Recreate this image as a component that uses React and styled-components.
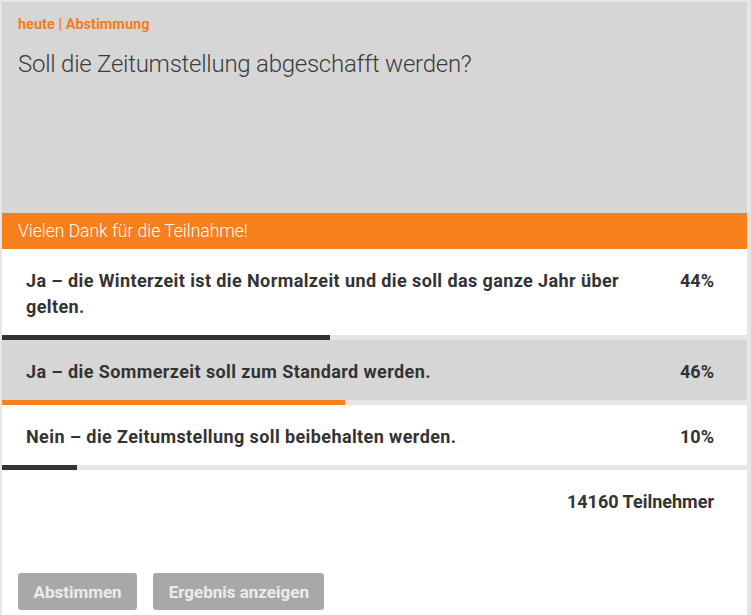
import React from "react";
import styled, { createGlobalStyle } from "styled-components";

const Global = createGlobalStyle`
  html, body { margin: 0; padding: 0; background: #e6e6e6; }
  body { font-family: Roboto, "Liberation Sans", Arial, sans-serif; color: #333; }
`;

const Frame = styled.div`
  padding: 2px 4px 0 2px;
  width: 745px;
`;

const Widget = styled.div`
  background: #fff;
  display: flex;
  flex-direction: column;
`;

const Header = styled.header`
  background: #d6d6d6;
  height: 211px;
  box-sizing: border-box;
  padding: 14px 16px;
`;

const Kicker = styled.div`
  color: #f47c20;
  font-size: 14.5px;
  font-weight: 700;
  line-height: 18px;
`;

const Title = styled.h1`
  margin: 15px 0 0;
  font-size: 24px;
  font-weight: 300;
  line-height: 30px;
  color: #3c3c3c;
  letter-spacing: -0.25px;
`;

const Notice = styled.div`
  background: #f8801c;
  color: #fff;
  height: 36px;
  display: flex;
  align-items: center;
  padding: 0 16px;
  font-size: 17.5px;
  font-weight: 300;
`;

const Option = styled.div`
  display: flex;
  flex-direction: column;
  background: ${(p) => (p.$active ? "#d6d6d6" : "#fff")};
`;

const OptionBody = styled.div`
  display: flex;
  align-items: flex-start;
  justify-content: space-between;
  gap: 40px;
  padding: 19px 33px 15px 24px;
`;

const OptionText = styled.div`
  font-size: 18px;
  font-weight: 700;
  line-height: 26px;
  color: #333;
  letter-spacing: 0.4px;
  max-width: 615px;
`;

const Percent = styled.div`
  font-size: 18px;
  font-weight: 700;
  line-height: 26px;
  color: #333;
`;

const Track = styled.div`
  height: 5px;
  background: #e6e6e6;
  display: flex;
`;

const Fill = styled.div`
  height: 100%;
  background: ${(p) => (p.$active ? "#f8801c" : "#333")};
`;

const Footer = styled.div`
  display: flex;
  flex-direction: column;
  padding: 21px 33px 10px 16px;
`;

const Count = styled.div`
  align-self: flex-end;
  font-size: 18px;
  font-weight: 700;
  line-height: 22px;
  color: #333;
`;

const Buttons = styled.div`
  display: flex;
  gap: 16px;
  margin-top: 60px;
`;

const Button = styled.button`
  background: #a8a8a8;
  color: #ececec;
  border: none;
  border-radius: 3px;
  height: 37px;
  padding: 0 15.5px;
  font-family: Roboto, "Liberation Sans", Arial, sans-serif;
  font-size: 17px;
  font-weight: 700;
`;

const options = [
  { text: "Ja – die Winterzeit ist die Normalzeit und die soll das ganze Jahr über gelten.", pct: 44 },
  { text: "Ja – die Sommerzeit soll zum Standard werden.", pct: 46, active: true },
  { text: "Nein – die Zeitumstellung soll beibehalten werden.", pct: 10 },
];

export default function App() {
  return (
    <>
      <Global />
      <Frame>
        <Widget>
          <Header>
            <Kicker>heute | Abstimmung</Kicker>
            <Title>Soll die Zeitumstellung abgeschafft werden?</Title>
          </Header>
          <Notice>Vielen Dank für die Teilnahme!</Notice>
          {options.map((o) => (
            <Option key={o.text} $active={o.active}>
              <OptionBody>
                <OptionText>{o.text}</OptionText>
                <Percent>{o.pct}%</Percent>
              </OptionBody>
              <Track>
                <Fill $active={o.active} style={{ width: `${o.pct}%` }} />
              </Track>
            </Option>
          ))}
          <Footer>
            <Count>14160 Teilnehmer</Count>
            <Buttons>
              <Button>Abstimmen</Button>
              <Button>Ergebnis anzeigen</Button>
            </Buttons>
          </Footer>
        </Widget>
      </Frame>
    </>
  );
}
